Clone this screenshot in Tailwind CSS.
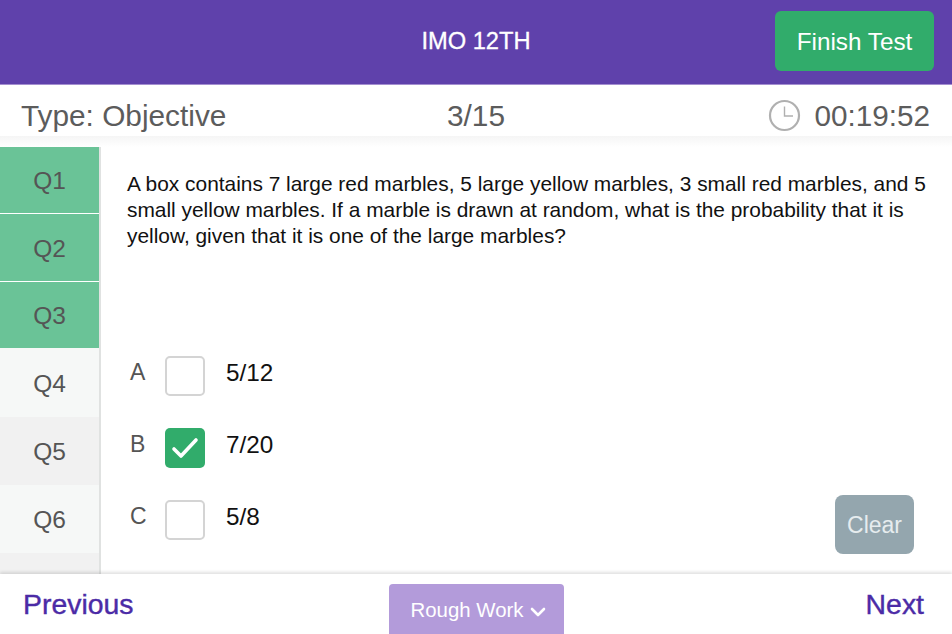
<!DOCTYPE html>
<html lang="en">
<head>
  <meta charset="UTF-8">
  <title>IMO 12TH</title>
  <script src="https://cdn.jsdelivr.net/npm/@tailwindcss/browser@4"></script>
</head>
<body class="bg-white w-[952px] h-[634px] overflow-hidden flex flex-col font-['Liberation_Sans',sans-serif]">
  <!-- header -->
  <header class="h-[85px] shrink-0 bg-[#5f41ab] border-b border-b-[#a48fd0] flex items-center relative pb-[1px]">
    <div class="w-full text-center text-white text-[23.7px] [-webkit-text-stroke:0.3px_white]">IMO 12TH</div>
    <button class="absolute left-[775px] top-[11px] w-[159px] h-[60px] rounded-[6px] bg-[#31ac6b] text-white text-[24.3px] pt-[2px]">Finish Test</button>
  </header>

  <!-- info bar -->
  <div class="h-[51px] shrink-0 flex items-center justify-between pl-[21px] pr-[22px] pt-[12px] text-[#5c5c5c] text-[29.8px] relative">
    <span>Type: Objective</span>
    <span class="absolute left-[447px]">3/15</span>
    <div class="flex items-center gap-[13px]">
      <svg width="33" height="33" viewBox="0 0 33 33" fill="none" stroke="#b0b0b0" class="mb-[2px]">
        <circle cx="16.5" cy="16.5" r="14.5" stroke-width="2.2"/>
        <path d="M16.5 7.5V17H25" stroke-width="1.4"/>
      </svg>
      <span class="text-[29.7px]">00:19:52</span>
    </div>
  </div>
  <div class="h-[11px] shrink-0 bg-gradient-to-b from-[#f5f5f5] to-white"></div>

  <!-- middle -->
  <div class="flex-1 flex min-h-0">
    <aside class="w-[101px] shrink-0 border-r-2 border-r-[#e0e2e1] flex flex-col overflow-hidden text-[#555] text-[24.5px]">
      <div class="h-[67px] shrink-0 bg-[#6ac397] flex items-center justify-center pt-[3px] border-b border-b-white">Q1</div>
      <div class="h-[68px] shrink-0 bg-[#6ac397] flex items-center justify-center pt-[3px] border-b border-b-white">Q2</div>
      <div class="h-[66px] shrink-0 bg-[#6ac397] flex items-center justify-center pt-[3px]">Q3</div>
      <div class="h-[69px] shrink-0 bg-[#f6f8f7] flex items-center justify-center pt-[4px]">Q4</div>
      <div class="h-[68px] shrink-0 bg-[#f1f1f1] flex items-center justify-center pt-[2px]">Q5</div>
      <div class="h-[68px] shrink-0 bg-[#f6f8f7] flex items-center justify-center pt-[2px]">Q6</div>
      <div class="flex-1 bg-[#f1f1f1]"></div>
    </aside>
    <main class="flex-1 relative pl-[26px] pt-[24px] text-[#111]">
      <p class="text-[20.9px] leading-[26px] w-[802px]">A box contains 7 large red marbles, 5 large yellow marbles, 3 small red marbles, and 5 small yellow marbles. If a marble is drawn at random, what is the probability that it is yellow, given that it is one of the large marbles?</p>

      <div class="mt-[107px] flex flex-col gap-[32px]">
        <div class="flex h-[40px]">
          <span class="w-[38px] pl-[3px] text-[#555] text-[23px] leading-[32px]">A</span>
          <span class="w-[40px] h-[40px] rounded-[5px] border-2 border-[#d4d4d4] bg-white"></span>
          <span class="ml-[21px] text-[24.3px] leading-[34px]">5/12</span>
        </div>
        <div class="flex h-[40px]">
          <span class="w-[38px] pl-[3px] text-[#555] text-[23px] leading-[32px]">B</span>
          <span class="w-[40px] h-[40px] rounded-[5px] bg-[#31ac6b] flex items-center justify-center">
            <svg width="28" height="24" viewBox="0 0 28 24" fill="none" stroke="white" stroke-width="3.6" stroke-linecap="round" stroke-linejoin="round"><path d="M3 13l7 7L25 4"/></svg>
          </span>
          <span class="ml-[21px] text-[24.3px] leading-[34px]">7/20</span>
        </div>
        <div class="flex h-[40px]">
          <span class="w-[38px] pl-[3px] text-[#555] text-[23px] leading-[32px]">C</span>
          <span class="w-[40px] h-[40px] rounded-[5px] border-2 border-[#d4d4d4] bg-white"></span>
          <span class="ml-[21px] text-[24.3px] leading-[34px]">5/8</span>
        </div>
      </div>

      <button class="absolute left-[734px] top-[348px] w-[79px] h-[59px] rounded-[8px] bg-[#94a6ae] text-[#e6ecee] text-[23px] pt-[1px]">Clear</button>
    </main>
  </div>

  <!-- footer -->
  <footer class="h-[60px] shrink-0 relative bg-white flex items-start justify-between pl-[23px] pr-[28px] pt-[14px] text-[#4b2ba6] text-[28.4px] leading-[32px] [-webkit-text-stroke:0.4px_#4b2ba6] shadow-[0_-2px_3px_rgba(0,0,0,0.12)]">
    <span>Previous</span>
    <button class="absolute left-[389px] top-[10px] w-[175px] h-[50px] rounded-t-[4px] bg-[#b39bda] text-white text-[20.4px] [-webkit-text-stroke:0] flex items-center justify-center gap-[7px] pt-[1px] pl-[4px]">
      Rough Work
      <svg width="16" height="10" viewBox="0 0 16 10" fill="none" stroke="white" stroke-width="2.6" stroke-linecap="round" stroke-linejoin="round" class="mt-[4px]"><path d="M2 2l6 6 6-6"/></svg>
    </button>
    <span>Next</span>
  </footer>
</body>
</html>
